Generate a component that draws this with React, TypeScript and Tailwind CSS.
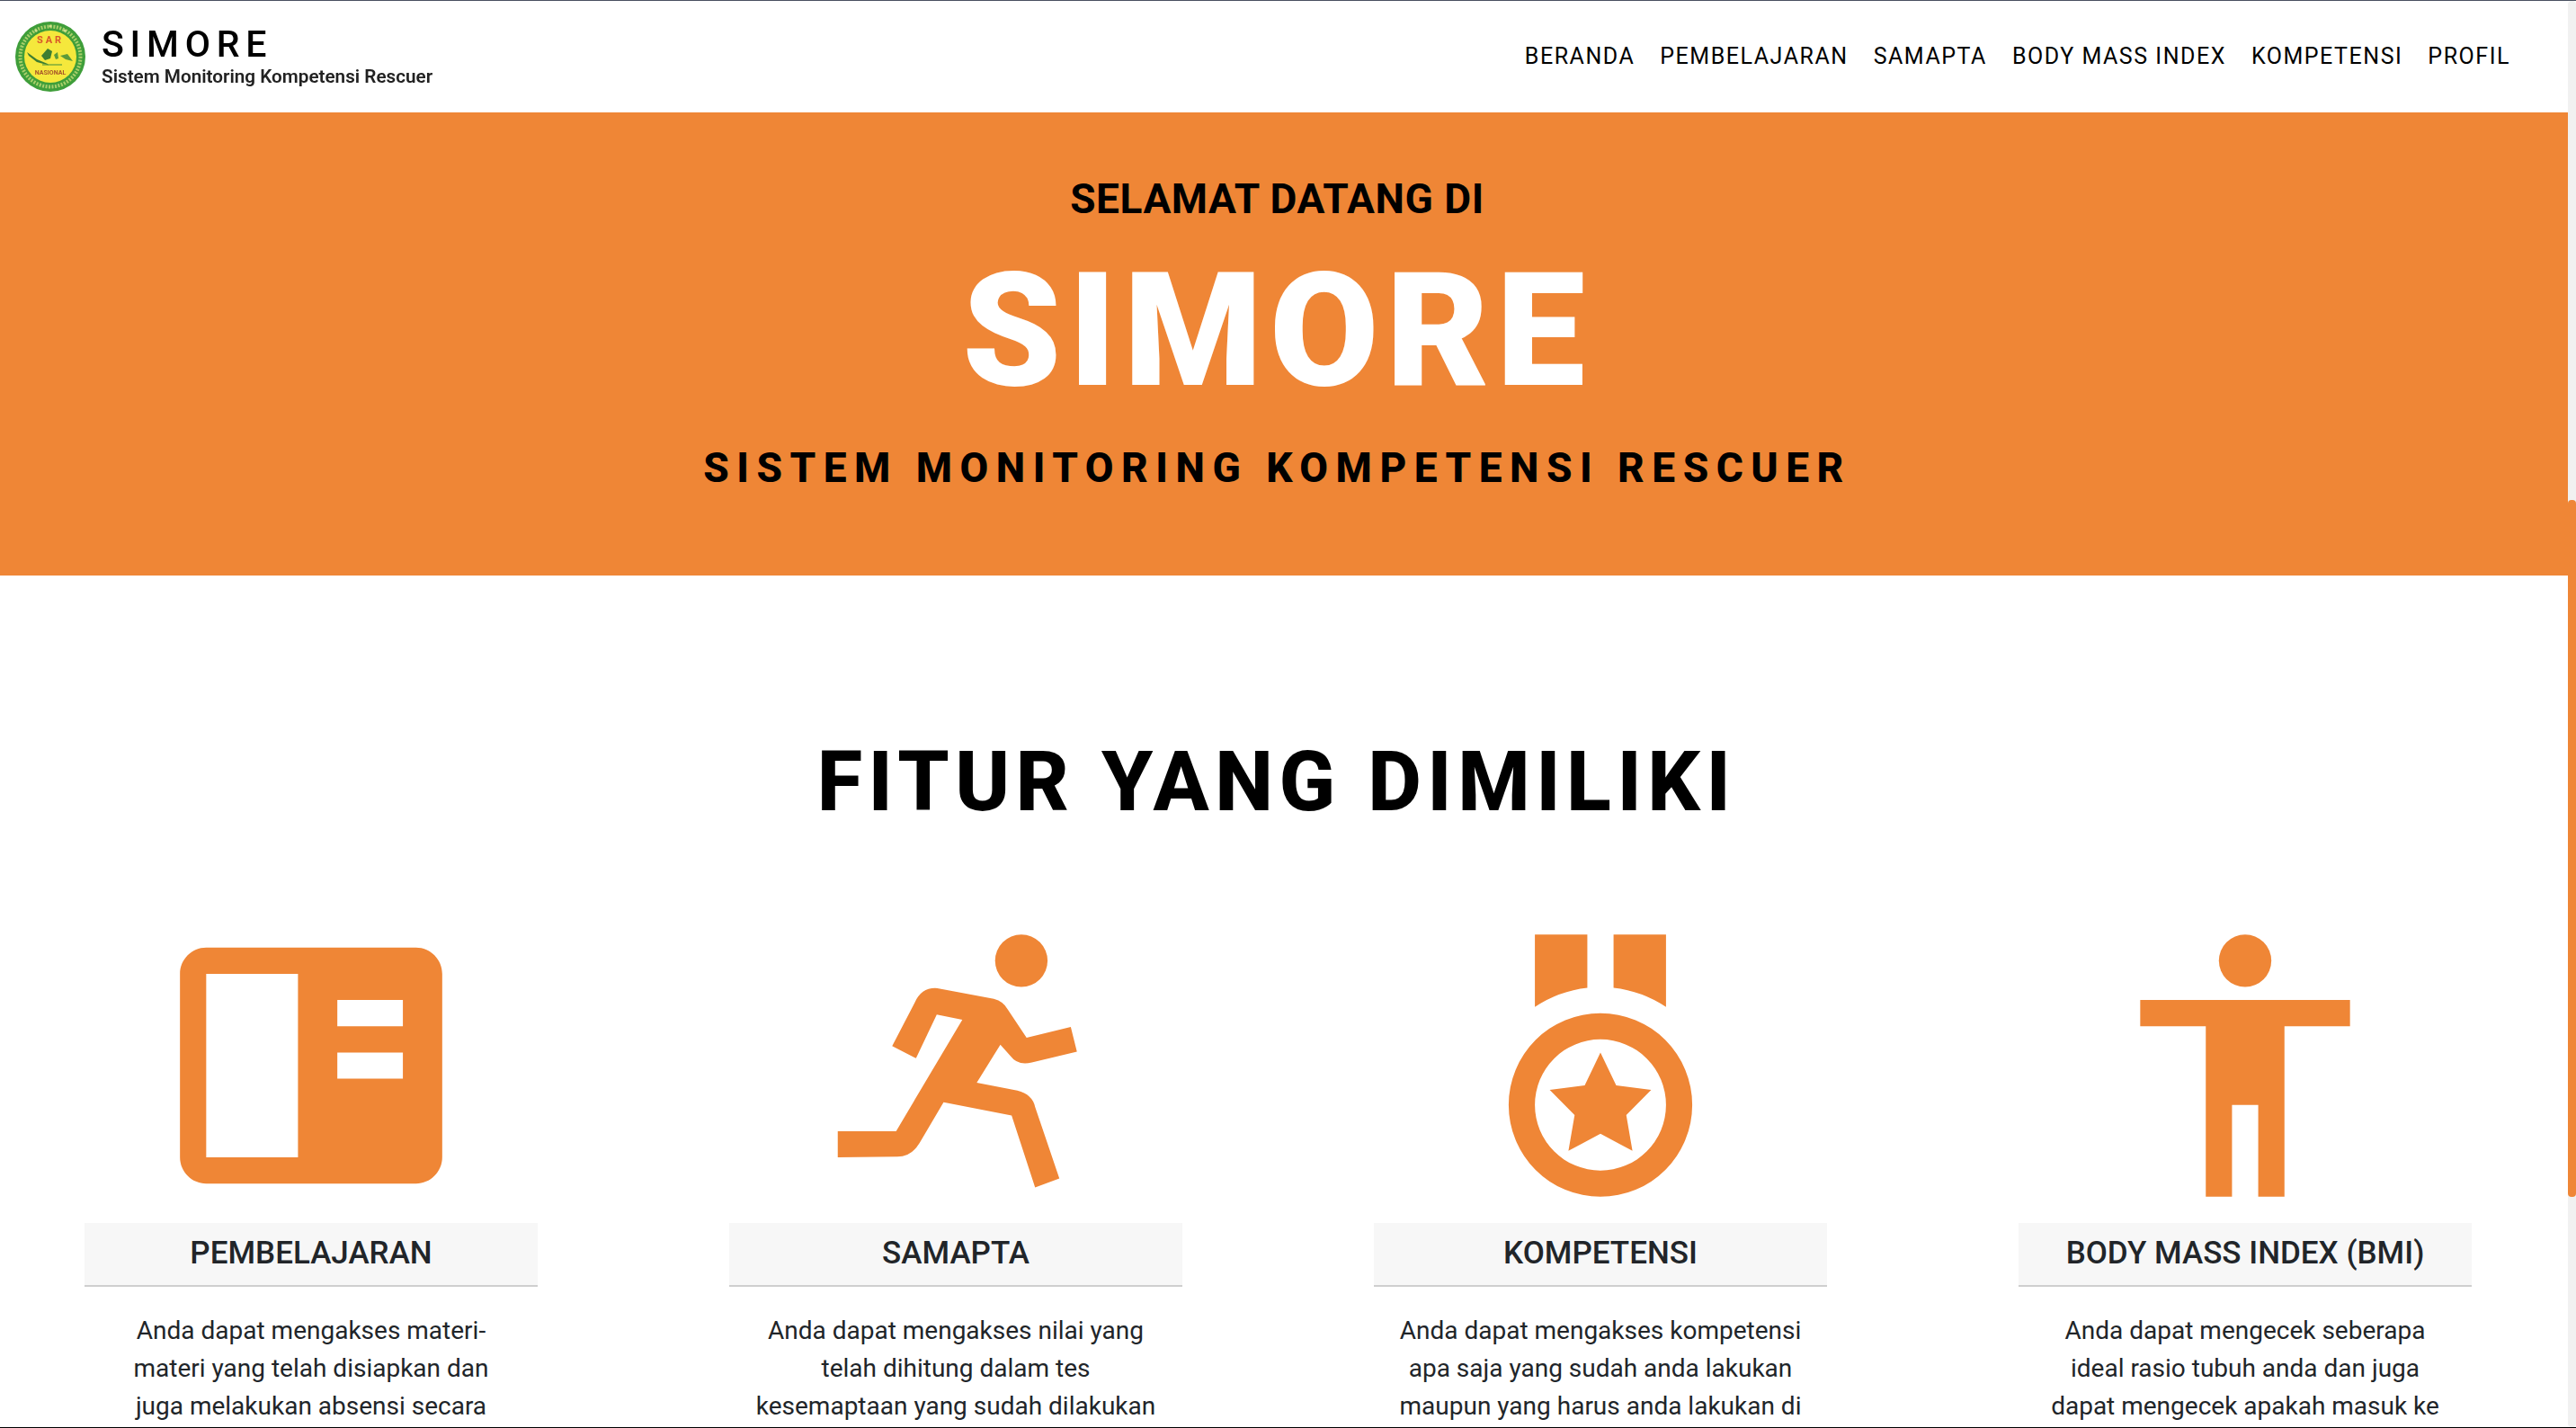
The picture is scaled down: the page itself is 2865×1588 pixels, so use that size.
import React from "react";

const navItems = ["BERANDA", "PEMBELAJARAN", "SAMAPTA", "BODY MASS INDEX", "KOMPETENSI", "PROFIL"];

const BookIcon = () => (
  <svg viewBox="0 0 24 24" className="w-[350px] h-[350px]" fill="#ef8636">
    <path
      fillRule="evenodd"
      d="M20 3H4c-1.1 0-2 .9-2 2v14c0 1.1.9 2 2 2h16c1.1 0 2-.9 2-2V5c0-1.1-.9-2-2-2zM11 19H4V5h7v14zm8-10h-5V7h5v2zm0 4h-5v-2h5v2z"
    />
  </svg>
);

const RunIcon = () => (
  <svg viewBox="0 0 24 24" className="w-[350px] h-[350px]" fill="#ef8636">
    <circle cx="17" cy="4" r="2" />
    <path d="M10.6 6.1L14.9 6.9Q15.65 7.1 15.95 7.7L17.4 9.87L20.77 9.05L21.24 10.94L17.8 11.76Q16.7 12 16.2 11.3L15.4 10.4L13.6 13.3L16.7 13.9Q17.85 14.2 18.05 15.15L19.9 20.6L18.05 21.3L16.26 15.8L11.07 14.8L9.24 17.9Q8.6 18.95 7.56 18.95L3 19V17H7.45L12.5 8.5L10.55 8.1L8.97 11.44L7.15 10.5L8.87 7.2Q9.4 6 10.6 6.1Z" />
  </svg>
);

const MedalIcon = () => (
  <svg viewBox="0 0 24 24" className="w-[350px] h-[350px]" fill="#ef8636">
    <path d="M7 2h4v4.06A9 9 0 0 0 7 7.52zM17 2h-4v4.06a9 9 0 0 1 4 1.46z" />
    <path
      fillRule="evenodd"
      d="M12 8a7 7 0 1 0 0 14 7 7 0 0 0 0-14zm0 2a5 5 0 1 1 0 10 5 5 0 0 1 0-10z"
    />
    <path d="M12 11L13.2 13.5L15.87 13.85L13.97 15.77L14.44 18.5L12 17.2L9.56 18.5L10.03 15.77L8.13 13.85L10.8 13.5Z" />
  </svg>
);

const BodyIcon = () => (
  <svg viewBox="0 0 24 24" className="w-[350px] h-[350px]" fill="#ef8636">
    <circle cx="12" cy="4" r="2" />
    <path d="M20 9h-5v13h-2v-7h-2v7H9V9H4V7h16v2z" />
  </svg>
);

const features = [
  {
    title: "PEMBELAJARAN",
    icon: <BookIcon />,
    lines: ["Anda dapat mengakses materi-", "materi yang telah disiapkan dan", "juga melakukan absensi secara"],
  },
  {
    title: "SAMAPTA",
    icon: <RunIcon />,
    lines: ["Anda dapat mengakses nilai yang", "telah dihitung dalam tes", "kesemaptaan yang sudah dilakukan"],
  },
  {
    title: "KOMPETENSI",
    icon: <MedalIcon />,
    lines: ["Anda dapat mengakses kompetensi", "apa saja yang sudah anda lakukan", "maupun yang harus anda lakukan di"],
  },
  {
    title: "BODY MASS INDEX (BMI)",
    icon: <BodyIcon />,
    lines: ["Anda dapat mengecek seberapa", "ideal rasio tubuh anda dan juga", "dapat mengecek apakah masuk ke"],
  },
];

const Logo = () => (
  <svg viewBox="0 0 78 78" className="w-[78px] h-[78px] shrink-0 blur-[0.6px]">
    <circle cx="39" cy="39" r="39" fill="#3f9e3a" />
    <circle cx="39" cy="39" r="33.5" fill="none" stroke="#a9cf6a" strokeWidth="4" strokeDasharray="2 1.5" />
    <circle cx="39" cy="39" r="29" fill="#f5e83c" />
    {/* stars on the ring */}
    <circle cx="23" cy="10" r="1.6" fill="#cfe08a" />
    <circle cx="39" cy="5" r="1.6" fill="#cfe08a" />
    <circle cx="55" cy="10" r="1.6" fill="#cfe08a" />
    <text x="39" y="24" textAnchor="middle" fontSize="11" fontWeight="700" fill="#d9562a" letterSpacing="3" fontFamily="Roboto">
      SAR
    </text>
    {/* islands */}
    <path d="M13 34L24 42L36 47L37 48.5L24 45L15 38Z" fill="#3d7d32" />
    <path d="M29 38L36 30L41 33L39 41L33 43Z" fill="#3d7d32" />
    <path d="M43 37L47 34L48 41L45 42ZM50 38L58 36L64 44L56 42Z" fill="#5c9a3a" />
    <path d="M30 48H52" stroke="#5c9a3a" strokeWidth="1.2" />
    <text x="39" y="59" textAnchor="middle" fontSize="7" fontWeight="700" fill="#a8562a" fontFamily="Roboto">
      NASIONAL
    </text>
  </svg>
);

export default function App() {
  return (
    <div className="h-[1588px] overflow-hidden flex flex-col bg-white font-['Roboto',sans-serif] border-t border-[#4a5060] border-b border-b-black">
      <div className="flex flex-1 min-h-0">
        <div className="w-[2856px] shrink-0 min-h-0 overflow-hidden">
          {/* Header */}
          <header className="h-[124px] flex items-center justify-between pl-[17px] pr-[64px]">
            <div className="flex items-center gap-[18px]">
              <Logo />
              <div className="flex flex-col blur-[0.4px]">
                <span className="text-[41px] leading-[44px] font-medium tracking-[6.8px] text-black">SIMORE</span>
                <span className="text-[20.7px] leading-[28px] font-semibold text-[#222] whitespace-nowrap">
                  Sistem Monitoring Kompetensi Rescuer
                </span>
              </div>
            </div>
            <nav className="flex gap-[28px]">
              {navItems.map((item) => (
                <a key={item} className="text-[25px] font-normal tracking-[1.53px] text-black">
                  {item}
                </a>
              ))}
            </nav>
          </header>

          {/* Hero */}
          <section className="h-[515px] bg-[#ef8636] flex flex-col items-center pr-[15px] pt-[68px]">
            <h2 className="text-[46px] leading-[56px] font-bold tracking-[0.55px] text-black">SELAMAT DATANG DI</h2>
            <h1 className="text-[176px] leading-[190px] font-black tracking-[8px] text-white mt-[24px]">SIMORE</h1>
            <p className="text-[46px] leading-[56px] font-extrabold tracking-[8.5px] text-black mt-[29px]">
              SISTEM MONITORING KOMPETENSI RESCUER
            </p>
          </section>

          {/* Fitur */}
          <section>
            <h2 className="text-[92px] leading-[100px] font-extrabold tracking-[6.5px] text-black text-center pr-[16px] mt-[180px]">
              FITUR YANG DIMILIKI
            </h2>
            <div className="grid grid-cols-4 gap-x-[213px] pl-[94px] pr-[107px] mt-[90px]">
              {features.map((f) => (
                <div key={f.title} className="flex flex-col items-center">
                  <div className="w-full h-[350px] flex justify-center">{f.icon}</div>
                  <h3 className="w-full h-[71px] flex items-center justify-center bg-[#f7f7f7] border-b-2 border-[#cfcfcf] text-[35px] font-medium text-[#212529]">
                    {f.title}
                  </h3>
                  <p className="mt-[28px] text-[28px] leading-[42px] text-[#212529] text-center whitespace-nowrap">
                    {f.lines.map((l) => (
                      <span key={l} className="block">
                        {l}
                      </span>
                    ))}
                  </p>
                </div>
              ))}
            </div>
          </section>
        </div>

        {/* Scrollbar */}
        <div className="w-[9px] shrink-0 bg-[#f1f1f1] rounded-[4px] flex flex-col">
          <div className="h-[555px]" />
          <div className="h-[775px] bg-[#ef8636] rounded-[4px]" />
        </div>
      </div>
    </div>
  );
}
